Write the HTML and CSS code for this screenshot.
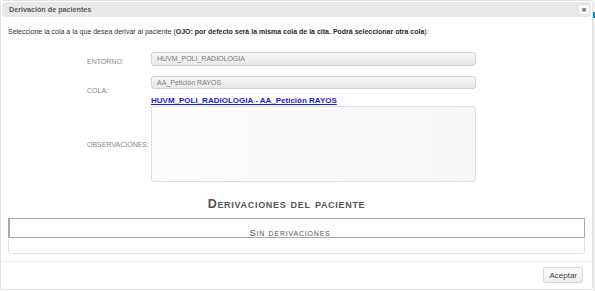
FILE: index.html
```html
<!DOCTYPE html>
<html lang="es">
<head>
<meta charset="utf-8">
<title>Derivación de pacientes</title>
<link rel="stylesheet" href="styles.css">
</head>
<body>
<div class="page-edge"></div>
<div class="dialog">
    <div class="titlebar">
        <span class="title">Derivación de pacientes</span>
        <button class="close" title="Cerrar">&#x2716;</button>
    </div>
    <div class="content">
        <p class="intro">Seleccione la cola a la que desea derivar al paciente (<b>OJO: por defecto será la misma cola de la cita. Podrá seleccionar otra cola</b>):</p>
        <div class="form">
            <div class="row row-entorno">
                <label>ENTORNO:</label>
                <div class="input">HUVM_POLI_RADIOLOGIA</div>
            </div>
            <div class="row row-cola">
                <label>COLA:</label>
                <div class="input">AA_Petición RAYOS</div>
            </div>
            <div class="row row-link">
                <label></label>
                <a href="#" class="link">HUVM_POLI_RADIOLOGIA - AA_Petición RAYOS</a>
            </div>
            <div class="row row-obs">
                <label>OBSERVACIONES:</label>
                <div class="textarea"></div>
            </div>
        </div>
        <h3 class="section">Derivaciones del paciente</h3>
        <div class="table">
            <div class="thead">Sin derivaciones</div>
            <div class="tbody"></div>
        </div>
    </div>
    <div class="buttons">
        <button class="btn">Aceptar</button>
    </div>
</div>
</body>
</html>
```

FILE: styles.css
```css
body, html {
    margin: 0;
    padding: 0;
    height: 100%;
    overflow: hidden;
    background: #fff;
}
body {
    font-family: "Liberation Sans", Arial, sans-serif;
    color: #333;
    position: relative;
}
.page-edge {
    position: absolute;
    right: 0;
    top: 0;
    width: 2px;
    height: 100%;
    background: linear-gradient(#f2f2f2 0, #f2f2f2 12px, #1f7fae 12px, #1f7fae 18px, #eeeeee 18px);
}
.dialog {
    width: 593px;
    height: 290px;
    box-sizing: border-box;
    border: 1px solid #e2e2e2;
    border-radius: 3px;
    background: #fff;
}
.titlebar {
    margin: 1px;
    height: 15px;
    background: #e8e8e8;
    border-radius: 3px;
    display: flex;
    align-items: center;
    justify-content: space-between;
    padding: 0 1px 0 7px;
}
.title {
    font-size: 7.2px;
    font-weight: bold;
    color: #5c5c5c;
}
.close {
    width: 12px;
    height: 11px;
    padding: 0;
    border: 1px solid #e2e2e2;
    border-radius: 2px;
    background: #fafafa;
    color: #666;
    font-size: 6px;
    line-height: 9px;
    font-family: "DejaVu Sans", sans-serif;
}
.content {
    padding: 0 6px;
}
.intro {
    font-size: 7px;
    line-height: 10px;
    margin: 10px 0 0 1px;
    color: #333;
}
.intro b {
    color: #2a2a2a;
}
.form {
    margin-top: 15px;
    padding-left: 80px;
}
.row {
    display: flex;
    align-items: flex-start;
}
.row label {
    width: 64px;
    flex: none;
    font-size: 7px;
    line-height: 10px;
    color: #888;
}
.input {
    width: 325px;
    box-sizing: border-box;
    border: 1px solid #d0d0d0;
    border-radius: 3px;
    background: linear-gradient(#f7f7f7, #e8e8e8);
    font-size: 7px;
    color: #7a7a7a;
    padding-left: 5px;
}
.row-entorno {
    height: 14px;
}
.row-entorno .input {
    height: 14px;
    line-height: 12px;
}
.row-entorno label {
    margin-top: 5px;
}
.row-cola {
    height: 13px;
    margin-top: 10px;
}
.row-cola .input {
    height: 13px;
    line-height: 11px;
}
.row-cola label {
    margin-top: 10px;
}
.row-link {
    height: 10px;
    margin-top: 7px;
}
.link {
    font-size: 8px;
    line-height: 10px;
    font-weight: bold;
    color: #1b1bd6;
    text-decoration: underline;
}
.row-obs label {
    margin-top: 34px;
}
.textarea {
    width: 325px;
    height: 76px;
    box-sizing: border-box;
    border: 1px solid #dedede;
    border-radius: 3px;
    background: linear-gradient(90deg, #fdfdfd, #f5f6f8);
}
.section {
    text-align: center;
    font-variant: small-caps;
    font-size: 12.5px;
    line-height: 14px;
    font-weight: bold;
    color: #555;
    margin: 15px 0 7px 0;
    padding-right: 20px;
    letter-spacing: 0.7px;
}
.table {
    margin: 0 1px;
}
.thead {
    height: 20px;
    box-sizing: border-box;
    border: 1px solid #a9a9a9;
    border-left-width: 2px;
    font-variant: small-caps;
    font-size: 9.5px;
    line-height: 10px;
    letter-spacing: 0.8px;
    color: #555;
    text-align: center;
    padding-top: 9px;
    padding-right: 14px;
}
.tbody {
    height: 16px;
    box-sizing: border-box;
    border: 1px solid #e2e2e2;
    border-top: none;
    border-radius: 0 0 3px 3px;
}
.buttons {
    margin-top: 7px;
    border-top: 1px solid #ededed;
    display: flex;
    justify-content: flex-end;
    padding: 5px 9px 0 0;
}
.btn {
    height: 16px;
    padding: 0 5px;
    border: 1px solid #d8d8d8;
    border-radius: 2px;
    background: linear-gradient(#fbfbfb, #ededed);
    font-family: "Liberation Sans", Arial, sans-serif;
    font-size: 8px;
    color: #444;
}
```
